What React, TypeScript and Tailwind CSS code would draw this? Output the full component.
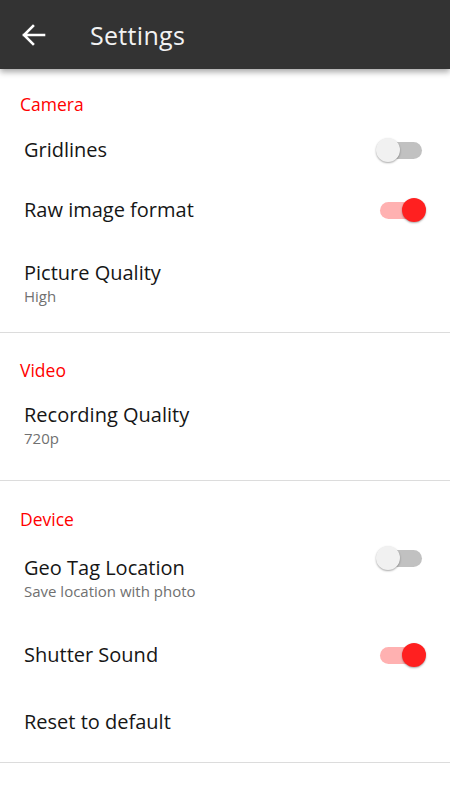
import React from "react";

function Toggle({ on, className = "" }: { on: boolean; className?: string }) {
  return (
    <div className={"relative w-[50px] h-[26px] shrink-0 " + className}>
      <div
        className={
          "absolute left-[4px] right-[4px] top-[4.5px] h-[17px] rounded-full " +
          (on ? "bg-[#ffb1b1]" : "bg-[#c1c1c1]")
        }
      />
      <div
        className={
          "absolute top-[1px] w-[24px] h-[24px] rounded-full shadow-[0_1px_2px_rgba(0,0,0,0.35)] " +
          (on ? "left-[26px] bg-[#ff2020]" : "left-0 bg-[#f1f1f1]")
        }
      />
    </div>
  );
}

function Category({ label, className }: { label: string; className: string }) {
  return (
    <div className={"pl-[20px] text-[17.5px] leading-[22px] font-normal text-[#ff0000] " + className}>
      {label}
    </div>
  );
}

function Divider() {
  return <div className="h-px bg-[#dcdcdc]" />;
}

const title = "text-[20px] leading-[26px] font-normal text-[#161616]";
const sub = "text-[15px] leading-[20px] font-normal text-[#707070]";

export default function App() {
  return (
    <div
      className="w-[450px] h-[800px] bg-white overflow-hidden"
      style={{ fontFamily: '"Open Sans", "Noto Sans", sans-serif' }}
    >
      <div className="relative z-10 h-[69px] bg-[#333333] flex items-center shadow-[0_3px_6px_rgba(0,0,0,0.35)]">
        <svg width="28" height="28" viewBox="0 0 28 28" className="ml-[20px]">
          <path
            d="M4 14H24M13 5L4 14L13 23"
            stroke="white"
            strokeWidth="2.6"
            fill="none"
            strokeLinecap="square"
          />
        </svg>
        <div className="ml-[42px] text-[25px] leading-[30px] text-[#f2f2f2] font-normal tracking-[0.3px]">
          Settings
        </div>
      </div>

      {/* Camera */}
      <Category label="Camera" className="pt-[24px] h-[51px]" />
      <div className="h-[60px] flex items-center justify-between pl-[24px] pr-[24px]">
        <div className={title}>Gridlines</div>
        <Toggle on={false} />
      </div>
      <div className="h-[60px] flex items-center justify-between pl-[24px] pr-[24px]">
        <div className={title}>Raw image format</div>
        <Toggle on={true} />
      </div>
      <div className="h-[92px] pt-[20px] pl-[24px]">
        <div className={title}>Picture Quality</div>
        <div className={sub}>High</div>
      </div>
      <Divider />

      {/* Video */}
      <Category label="Video" className="pt-[26px] h-[48px]" />
      <div className="h-[99px] pt-[21px] pl-[24px]">
        <div className={title}>Recording Quality</div>
        <div className={sub}>720p</div>
      </div>
      <Divider />

      {/* Device */}
      <Category label="Device" className="pt-[27px] h-[49px]" />
      <div className="h-[95px] pt-[25px] pl-[24px] pr-[24px] flex justify-between items-start">
        <div>
          <div className={title}>Geo Tag Location</div>
          <div className={sub}>Save location with photo</div>
        </div>
        <Toggle on={false} className="mt-[-10px]" />
      </div>
      <div className="h-[60px] flex items-center justify-between pl-[24px] pr-[24px]">
        <div className={title}>Shutter Sound</div>
        <Toggle on={true} />
      </div>
      <div className="h-[77px] pt-[24px] pl-[24px]">
        <div className={title}>Reset to default</div>
      </div>
      <Divider />
    </div>
  );
}
